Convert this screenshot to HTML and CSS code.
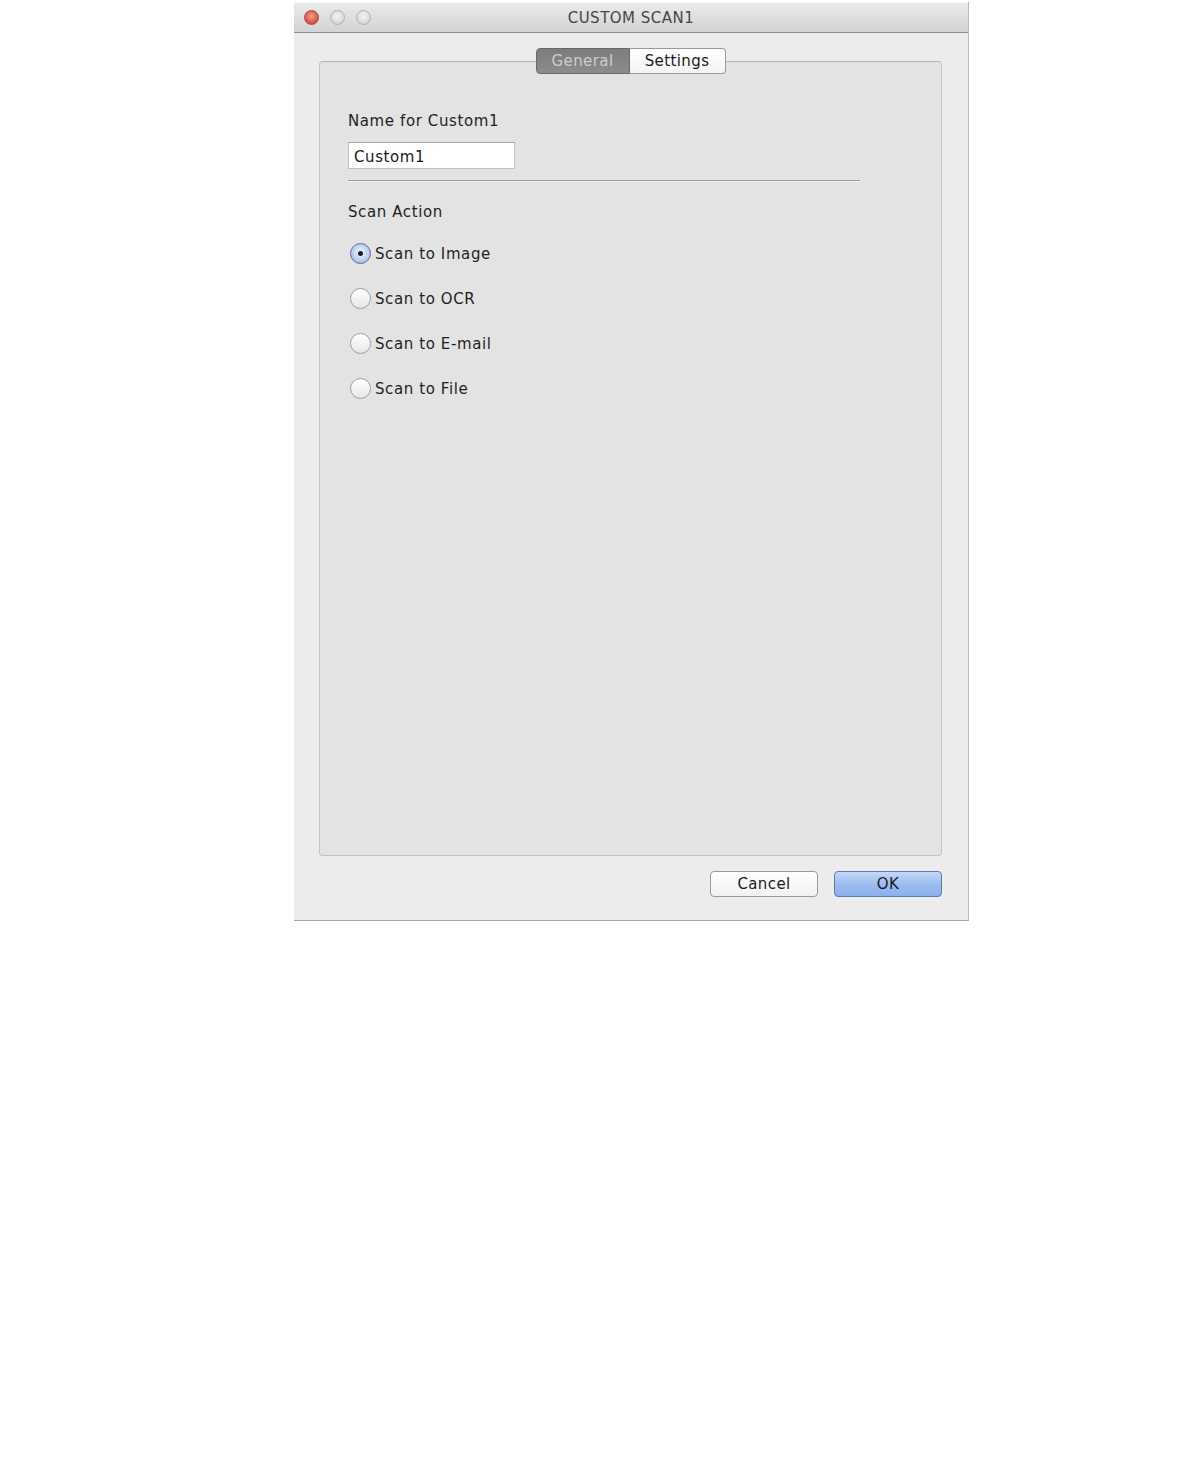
FILE: index.html
```html
<!DOCTYPE html>
<html>
<head>
<meta charset="utf-8">
<link rel="stylesheet" href="styles.css">
</head>
<body>
<div class="window">
  <div class="titlebar">
    <div class="lights">
      <span class="light red"></span>
      <span class="light gray"></span>
      <span class="light gray"></span>
    </div>
    <div class="title">CUSTOM SCAN1</div>
  </div>
  <div class="content">
    <div class="tabs">
      <div class="tab selected">General</div>
      <div class="tab">Settings</div>
    </div>
    <div class="panel">
      <div class="label">Name for Custom1</div>
      <div class="field">Custom1</div>
      <div class="separator"></div>
      <div class="label action">Scan Action</div>
      <div class="radios">
        <div class="radio-row"><span class="radio checked"></span><span>Scan to Image</span></div>
        <div class="radio-row"><span class="radio"></span><span>Scan to OCR</span></div>
        <div class="radio-row"><span class="radio"></span><span>Scan to E-mail</span></div>
        <div class="radio-row"><span class="radio"></span><span>Scan to File</span></div>
      </div>
    </div>
    <div class="buttons">
      <div class="button">Cancel</div>
      <div class="button default">OK</div>
    </div>
  </div>
</div>
</body>
</html>
```
FILE: styles.css
```css
html, body {
  margin: 0;
  padding: 0;
  background: #ffffff;
}
body {
  font-family: "DejaVu Sans", "Liberation Sans", sans-serif;
  color: #1f1f1f;
  letter-spacing: 0.6px;
}
.window {
  margin: 2px 0 0 294px;
  width: 675px;
  height: 919px;
  box-sizing: border-box;
  background: #ececec;
  border-right: 1px solid #b8b8b8;
  border-bottom: 1px solid #a8a8a8;
  display: flex;
  flex-direction: column;
}
.titlebar {
  height: 31px;
  flex: none;
  display: flex;
  align-items: center;
  background: linear-gradient(#ebebeb, #d3d3d3);
  border-bottom: 1px solid #8f8f8f;
  border-top: 1px solid #f6f6f6;
  box-sizing: border-box;
}
.lights {
  display: flex;
  gap: 11px;
  padding-left: 10px;
  width: 90px;
}
.light {
  width: 15px;
  height: 15px;
  border-radius: 50%;
  box-sizing: border-box;
}
.light.red {
  background: radial-gradient(circle at 50% 40%, #f3a191 0%, #dc5a48 60%, #b8402f 100%);
  border: 1px solid #a94a3e;
}
.light.gray {
  background: radial-gradient(circle at 50% 40%, #f4f4f4 0%, #dcdcdc 60%, #c6c6c6 100%);
  border: 1px solid #b2b2b2;
}
.title {
  flex: 1;
  text-align: center;
  font-size: 15px;
  color: #464646;
  margin-right: 100px;
  letter-spacing: 0.5px;
}
.content {
  flex: 1;
  display: flex;
  flex-direction: column;
  padding: 15px 26px 23px 25px;
}
.tabs {
  display: flex;
  justify-content: center;
  margin-bottom: -13px;
  position: relative;
  z-index: 1;
}
.tab {
  height: 26px;
  box-sizing: border-box;
  display: flex;
  align-items: center;
  justify-content: center;
  font-size: 15px;
  background: linear-gradient(#ffffff, #f3f3f3);
  border: 1px solid #9a9a9a;
  color: #1a1a1a;
  letter-spacing: 0.4px;
}
.tab:first-child {
  width: 94px;
  border-radius: 4px 0 0 4px;
}
.tab:last-child {
  width: 96px;
  border-left: none;
  border-radius: 0 4px 4px 0;
}
.tab.selected {
  background: linear-gradient(#7c7c7c, #8c8c8c);
  border-color: #6a6a6a;
  color: #cdcdcd;
}
.panel {
  height: 795px;
  box-sizing: border-box;
  background: #e3e3e3;
  border: 1px solid #c4c4c4;
  border-top-color: #b4b4b4;
  border-radius: 4px;
  padding: 50px 28px 0 28px;
}
.label {
  font-size: 15px;
  color: #1f1f1f;
  line-height: 18px;
}
.field {
  margin-top: 12px;
  width: 167px;
  height: 27px;
  box-sizing: border-box;
  background: #ffffff;
  border: 1px solid #c2c2c2;
  border-top-color: #a8a8a8;
  font-size: 15px;
  line-height: 25px;
  padding: 2px 0 0 5px;
  color: #1a1a1a;
}
.separator {
  margin-top: 11px;
  width: 512px;
  height: 0;
  border-top: 1px solid #9b9b9b;
  border-bottom: 1px solid #f2f2f2;
}
.label.action {
  margin-top: 21px;
}
.radios {
  margin-top: 22px;
  padding-left: 2px;
  display: flex;
  flex-direction: column;
  gap: 24px;
}
.radio-row {
  display: flex;
  align-items: center;
  gap: 4px;
  height: 21px;
  font-size: 15px;
  color: #1f1f1f;
}
.radio {
  width: 21px;
  height: 21px;
  border-radius: 50%;
  box-sizing: border-box;
  border: 1px solid #9c9c9c;
  background: linear-gradient(#ffffff, #e6e6e6);
  flex: none;
  display: flex;
  align-items: center;
  justify-content: center;
}
.radio.checked {
  border-color: #56709f;
  background: radial-gradient(circle at 50% 45%, #f2f6fd 0%, #c3d3f1 50%, #8ea8da 100%);
}
.radio.checked::after {
  content: "";
  width: 5px;
  height: 5px;
  border-radius: 50%;
  background: #1c1c1c;
}
.buttons {
  margin-top: 15px;
  display: flex;
  justify-content: flex-end;
  gap: 16px;
}
.button {
  width: 108px;
  height: 26px;
  box-sizing: border-box;
  border-radius: 4px;
  border: 1px solid #9a9a9a;
  background: linear-gradient(#ffffff, #f1f1f1);
  display: flex;
  align-items: center;
  justify-content: center;
  font-size: 15px;
  color: #1a1a1a;
  letter-spacing: 0.4px;
}
.button.default {
  border-color: #5c7bb6;
  background: linear-gradient(#c5d7f6, #9cbcf0 50%, #8cb0ec);
}
```
